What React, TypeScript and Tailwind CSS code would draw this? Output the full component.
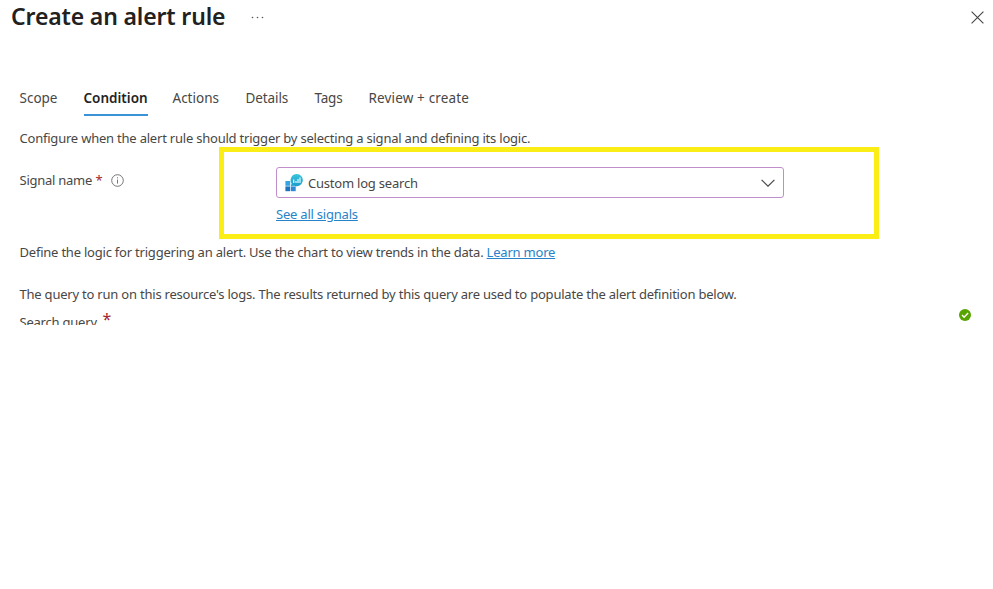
import React from "react";

const tabs = [
  { label: "Scope", style: "w-[39px]" },
  { label: "Condition", style: "w-16 font-semibold text-[#242322] border-b-2 border-[#3a93d6]" },
  { label: "Actions", style: "w-[48px]" },
  { label: "Details", style: "w-11 tracking-[-0.1px]" },
  { label: "Tags", style: "w-[29px] tracking-[-0.2px]" },
  { label: "Review + create", style: "w-[102px] tracking-[0.15px]" },
];

function MonitorIcon() {
  return (
    <svg width="18" height="18" viewBox="0 0 18 18" className="shrink-0">
      <defs>
        <linearGradient id="bubble" x1="0" y1="0" x2="0" y2="1">
          <stop offset="0" stopColor="#38c6dc" />
          <stop offset="1" stopColor="#1b9ccb" />
        </linearGradient>
      </defs>
      <path d="M0.4 7h4.8v4.8H0.4z" fill="#35a4e4" />
      <path d="M0.4 12.4h4.8v4.8H0.4z" fill="#1f72bd" />
      <path d="M5.9 12.4h4.8v4.8H5.9z" fill="#2f8ad6" />
      <path d="M11.7 0a6.1 6.1 0 1 1-2.4 11.7L5.8 12l.8-2.6A6.1 6.1 0 0 1 11.7 0z" fill="url(#bubble)" />
      <path d="M8.7 5.5v3.4M11 7v1.9M13 5v3.9M15 3.5v5.4" stroke="#e2fbff" strokeWidth="1.2" />
    </svg>
  );
}

export default function App() {
  return (
    <main className="relative h-[589px] w-[993px] overflow-hidden bg-white font-['Noto_Sans',sans-serif] text-[13px] leading-5 tracking-[-0.215px] text-[#484746]">
      <div className="flex h-[325px] flex-col overflow-hidden">
        <header className="flex h-[34px] shrink-0 items-center pl-[11px] pr-[9px]">
          <h1 className="w-60 whitespace-nowrap pb-px text-[23px] font-semibold leading-[31px] tracking-[-0.15px] text-[#222120]">Create an alert rule</h1>
          <svg width="13" height="3" viewBox="0 0 13 3" fill="#555">
            <circle cx="1.5" cy="1.5" r="0.8" />
            <circle cx="6.5" cy="1.5" r="0.8" />
            <circle cx="11.5" cy="1.5" r="0.8" />
          </svg>
          <svg className="ml-auto" width="13" height="13" viewBox="0 0 13 13" fill="none" stroke="#444" strokeWidth="1.1">
            <path d="M0.6 0.6l11.8 11.8M12.4 0.6L0.6 12.4" />
          </svg>
        </header>
        <nav className="mt-[54px] flex h-7 shrink-0 gap-[25px] pl-[19.5px] text-[13.5px] tracking-normal">
          {tabs.map((tab) => (
            <div key={tab.label} className={`whitespace-nowrap ${tab.style}`}>
              {tab.label}
            </div>
          ))}
        </nav>
        <p className="mt-3 shrink-0 whitespace-nowrap pl-[19.5px]">Configure when the alert rule should trigger by selecting a signal and defining its logic.</p>
        <section className="mt-[19px] flex h-[56px] shrink-0 pl-[19.5px]">
          <div className="flex h-[26px] w-[256.5px] items-center">
            <span className="w-[72px] whitespace-nowrap tracking-[-0.25px]">Signal name</span>
            <span className="ml-1 text-[#a4262c]">*</span>
            <svg className="ml-[9px]" width="13" height="13" viewBox="0 0 13 13" fill="none" stroke="#686766" strokeWidth="0.9">
              <circle cx="6.5" cy="6.5" r="5.8" />
              <path d="M6.5 5.6v4M6.5 3.3v1.1" />
            </svg>
          </div>
          <div className="w-[508px]">
            <div className="flex h-[31px] items-center rounded-[3px] border border-[#c08fcb] pl-2 pr-2">
              <MonitorIcon />
              <span className="ml-[5px]">Custom log search</span>
              <svg className="ml-auto" width="14" height="8" viewBox="0 0 14 8" fill="none" stroke="#4b4a49" strokeWidth="1.2">
                <path d="M0.6 0.8L7 7.2l6.4-6.4" />
              </svg>
            </div>
            <a className="mt-1.5 inline-block text-[#2783c9] underline">See all signals</a>
          </div>
        </section>
        <p className="mt-[19px] shrink-0 whitespace-nowrap pl-[19.5px]">
          Define the logic for triggering an alert. Use the chart to view trends in the data. <a className="text-[#2783c9] underline">Learn more</a>
        </p>
        <p className="mt-[22px] shrink-0 whitespace-nowrap pl-[19.5px]">
          The query to run on this resource's logs. The results returned by this query are used to populate the alert definition below.
        </p>
        <div className="mt-[7px] flex h-5 shrink-0 pl-[19.5px] pr-[22px]">
          <span className="w-[77px] whitespace-nowrap pt-px">Search query</span>
          <span className="-mt-[4px] ml-1.5 text-base text-[#a4262c]">*</span>
          <svg className="-mt-0.5 ml-auto" width="12" height="12" viewBox="0 0 12 12">
            <circle cx="6" cy="6" r="6" fill="#57a300" />
            <path d="M3 6.1l2.1 2.1L9.1 4" fill="none" stroke="#fff" strokeWidth="1.4" />
          </svg>
        </div>
      </div>
      <div className="absolute left-[219px] top-[147px] h-[92px] w-[660px] border-[5px] border-[#faee16]" />
    </main>
  );
}
